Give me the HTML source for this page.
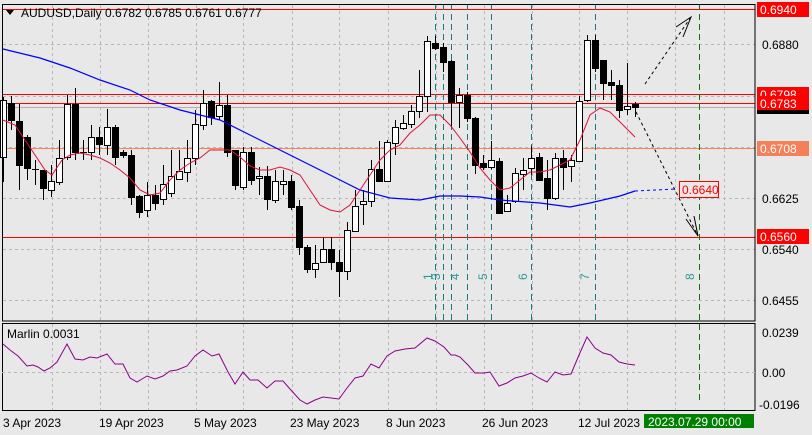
<!DOCTYPE html>
<html><head><meta charset="utf-8"><style>
html,body{margin:0;padding:0;background:#e8e8e8;width:812px;height:435px;overflow:hidden}
svg{display:block;font-family:"Liberation Sans","DejaVu Sans",sans-serif}
</style></head><body>
<svg id="s" width="812" height="435" viewBox="0 0 812 435" xmlns="http://www.w3.org/2000/svg">
<rect width="812" height="435" fill="#e8e8e8"/>
<g id="grid" stroke="#b8b8b8" stroke-dasharray="3,3" stroke-width="1"></g>
<line x1="2" y1="9.5" x2="755" y2="9.5" stroke="#ff0000"/>
<line x1="2" y1="94.5" x2="755" y2="94.5" stroke="#ff0000"/>
<line x1="2" y1="103.5" x2="755" y2="103.5" stroke="#ff0000"/>
<line x1="2" y1="107.5" x2="755" y2="107.5" stroke="#b0b0b0"/>
<line x1="2" y1="148.5" x2="755" y2="148.5" stroke="#ff7f50"/>
<line x1="2" y1="237.5" x2="755" y2="237.5" stroke="#ff0000"/>
<g stroke="#1a7a80" stroke-dasharray="6,4" stroke-width="1">
<line x1="435.5" y1="4" x2="435.5" y2="321"/><line x1="443.5" y1="4" x2="443.5" y2="321"/>
<line x1="451.5" y1="4" x2="451.5" y2="321"/><line x1="467.5" y1="4" x2="467.5" y2="321"/>
<line x1="491.5" y1="4" x2="491.5" y2="321"/><line x1="531.5" y1="4" x2="531.5" y2="321"/>
<line x1="595.5" y1="4" x2="595.5" y2="321"/>
</g>
<line x1="699.5" y1="4" x2="699.5" y2="404" stroke="#107010" stroke-dasharray="6,4"/>
<g fill="#2a9a9a" font-size="12">
<text transform="translate(432,280) rotate(-90)">1</text>
<text transform="translate(440,280) rotate(-90)">3</text>
<text transform="translate(459,280) rotate(-90)">4</text>
<text transform="translate(487,280) rotate(-90)">5</text>
<text transform="translate(527,280) rotate(-90)">6</text>
<text transform="translate(589,280) rotate(-90)">7</text>
<text transform="translate(694,280) rotate(-90)">8</text>
</g>
<g id="candles"></g>
<polyline fill="none" stroke="#0000ff" stroke-width="1.2" points="3,49 40,58 70,68 100,80 130,90 150,100 180,110 220,120 250,135 280,150 310,165 340,180 360,190 390,198 420,200 440,196 460,196 480,197 500,200 540,203 570,207 590,203 620,196 635,191"/>
<polyline fill="none" stroke="#0000ff" stroke-dasharray="3,3" points="635,191 676,189"/>
<polyline fill="none" stroke="#e0103a" stroke-width="1" points="3,120 15,125 25,140 35,155 45,170 52,175 62,160 70,155 80,153 90,155 100,158 110,163 120,170 130,178 140,190 150,195 160,193 170,180 180,170 190,163 200,158 210,150 220,150 230,150 240,157 250,166 260,170 270,170 280,167 290,170 300,175 310,190 320,205 330,210 340,212 350,205 360,190 370,175 380,160 390,150 400,145 410,133 420,125 430,115 440,115 450,125 460,138 470,152 480,168 490,180 500,190 510,188 520,180 530,172 540,172 550,170 560,165 570,160 580,140 590,115 600,108 610,112 620,122 630,132 635,137"/>
<g stroke="#000" fill="none" stroke-dasharray="3,3">
<line x1="645" y1="84" x2="691" y2="17"/>
<line x1="636" y1="112" x2="698" y2="236"/>
</g>
<g stroke="#000" fill="none">
<polyline points="676,27 691,17 683,37"/>
<polyline points="686,219 698,236 694,216"/>
</g>
<rect x="679.5" y="181.5" width="39" height="16" fill="#e8e8e8" stroke="#ff0000"/>
<text x="682" y="194" fill="#ff0000" font-size="12">0.6640</text>
<rect x="2.5" y="4.5" width="752.5" height="316.5" fill="none" stroke="#000"/>
<rect x="2.5" y="323.5" width="752.5" height="87" fill="none" stroke="#000"/>
<line x1="2" y1="372.5" x2="755" y2="372.5" stroke="#b8b8b8" stroke-dasharray="3,3"/>
<polyline fill="none" stroke="#8b008b" stroke-width="1" points="3,344 10,350 18,356 27,366 33,365 38,367 44,371 50,368 57,362 67,344 75,359 83,360 90,357 97,358 107,354 115,364 123,364 130,378 137,382 147,376 155,379 163,376 170,371 177,370 187,366 195,356 203,350 212,356 219,354 228,372 235,384 243,372 250,380 258,380 267,388 275,381 283,381 290,389 300,400 307,404 315,400 323,397 331,398 339,399 347,388 355,378 363,376 371,364 379,368 387,356 395,351 405,349 415,348 427,338 435,341 444,347 451,355 455,355 460,357 468,365 475,373 484,373 490,372 499,386 507,383 515,378 523,376 531,373 539,378 547,382 555,372 563,375 571,374 579,355 587,337 595,348 603,353 611,355 619,362 627,364 635,365"/>
<polygon points="6,10 14,10 10,15" fill="#000"/>
<text x="21" y="17" font-size="12" fill="#000">AUDUSD,Daily  0.6782 0.6785 0.6761 0.6777</text>
<text x="7" y="338" font-size="12" fill="#000">Marlin 0.0031</text>
<g font-size="12" fill="#000">
<rect x="757" y="2" width="52" height="15" fill="#ff0000"/><text x="760" y="14" fill="#fff">0.6940</text>
<text x="762" y="49">0.6880</text>
<rect x="757" y="87" width="52" height="14" fill="#ff0000"/><text x="760" y="99" fill="#fff">0.6798</text>
<rect x="757" y="110" width="52" height="4" fill="#000"/>
<rect x="757" y="96" width="52" height="14" fill="#ff0000"/><text x="760" y="108" fill="#fff">0.6783</text>
<rect x="757" y="141" width="52" height="15" fill="#f4805a"/><text x="760" y="153" fill="#fff">0.6708</text>
<text x="762" y="203">0.6625</text>
<rect x="757" y="229" width="52" height="15" fill="#ff0000"/><text x="760" y="241" fill="#fff">0.6560</text>
<text x="762" y="254">0.6540</text>
<text x="762" y="305">0.6455</text>
<text x="762" y="337">0.0239</text>
<text x="762" y="377">0.00</text>
<text x="759" y="409">-0.0196</text>
</g>
<g font-size="12" fill="#000">
<text x="3" y="427">3 Apr 2023</text>
<text x="99" y="427">19 Apr 2023</text>
<text x="194" y="427">5 May 2023</text>
<text x="290" y="427">23 May 2023</text>
<text x="386" y="427">8 Jun 2023</text>
<text x="482" y="427">26 Jun 2023</text>
<text x="578" y="427">12 Jul 2023</text>
</g>
<rect x="644" y="414" width="110" height="14" fill="#008000"/>
<text x="648" y="426" font-size="12" fill="#fff">2023.07.29 00:00</text>
</svg>
<script>
var NS="http://www.w3.org/2000/svg";
function el(p,t,a){var e=document.createElementNS(NS,t);for(var k in a)e.setAttribute(k,a[k]);p.appendChild(e);return e;}
var g=document.getElementById('grid');
[52,100,148,196,243,292,339,388,436,484,532,579,627,675,724].forEach(function(x){el(g,'line',{x1:x+.5,y1:5,x2:x+.5,y2:321});el(g,'line',{x1:x+.5,y1:324,x2:x+.5,y2:410});});
[44,96,147,198,249,300].forEach(function(y){el(g,'line',{x1:3,y1:y+.5,x2:755,y2:y+.5});});
var C=[[1,100,157,97,182],[0,103,120,96,130],[0,121,165,104,190],[0,137,168,135,180],[2,169,169,160,185],[0,170,188,170,200],[1,181,190,165,197],[1,158,182,140,185],[1,104,157,95,160],[0,104,152,88,160],[2,152,152,140,160],[1,137,152,125,160],[0,137,144,127,155],[1,127,145,109,155],[0,127,157,125,165],[0,152,155,150,158],[0,155,197,150,205],[0,196,212,195,218],[1,195,210,182,217],[0,195,203,185,210],[1,184,199,165,205],[1,176,193,150,197],[1,171,179,150,180],[1,158,172,140,182],[1,124,158,110,165],[1,103,125,90,130],[0,101,117,100,125],[1,105,116,82,120],[0,105,152,95,157],[0,150,185,150,190],[1,152,187,147,190],[0,152,180,147,185],[1,176,178,167,195],[0,176,199,166,210],[1,181,200,170,203],[1,181,184,170,195],[0,181,207,175,210],[0,206,247,200,255],[0,247,269,245,273],[1,263,269,245,278],[1,249,262,238,262],[0,249,262,237,270],[0,262,271,250,297],[1,230,271,222,280],[1,206,231,190,232],[1,201,204,190,225],[1,169,201,160,207],[0,169,181,141,182],[1,142,181,140,182],[1,127,143,120,155],[1,123,128,115,130],[1,111,124,105,128],[1,96,111,70,118],[1,41,96,36,112],[0,43,48,36,50],[0,47,62,43,72],[0,61,102,60,128],[1,95,102,88,128],[0,95,118,92,122],[0,118,165,117,174],[0,163,167,155,170],[1,160,167,141,169],[0,161,213,158,213],[1,203,211,195,212],[1,173,201,168,203],[1,170,174,158,190],[1,158,168,146,175],[0,157,180,153,181],[0,178,198,160,210],[1,158,198,153,200],[0,158,167,150,190],[1,160,166,155,182],[1,101,161,96,162],[1,40,100,35,102],[0,40,68,35,72],[0,60,83,60,100],[0,82,85,70,100],[0,85,110,80,118],[1,106,109,63,115],[0,104,107,102,117]];
var cg=document.getElementById('candles');
C.forEach(function(c,i){var x=3+8*i;
el(cg,'line',{x1:x+.5,y1:c[3],x2:x+.5,y2:c[4],stroke:'#000'});
if(c[0]==2){el(cg,'line',{x1:x-3,y1:c[1]+.5,x2:x+4,y2:c[1]+.5,stroke:'#000'});}
else{var h=Math.max(c[2]-c[1],2);el(cg,'rect',{x:x-2.5,y:c[1]+.5,width:6,height:h,fill:c[0]?'#fff':'#000',stroke:'#000'});}
});
</script>
</body></html>
